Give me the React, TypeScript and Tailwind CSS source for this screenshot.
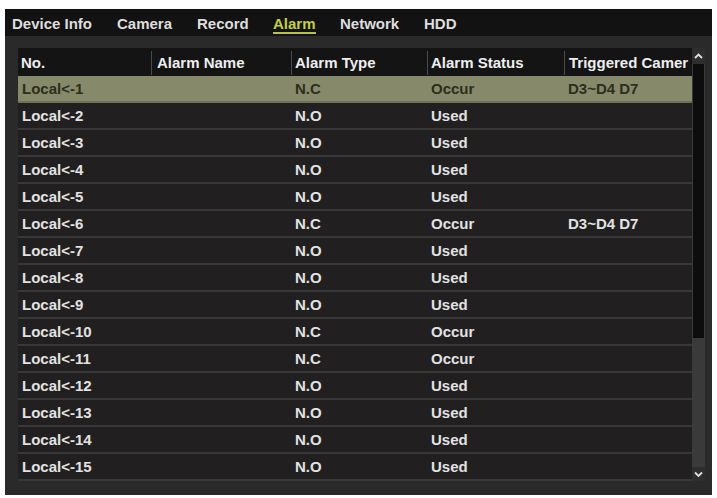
import React from "react";

const rows: [string, string, string, string][] = [
  ["Local<-1", "N.C", "Occur", "D3~D4 D7"],
  ["Local<-2", "N.O", "Used", ""],
  ["Local<-3", "N.O", "Used", ""],
  ["Local<-4", "N.O", "Used", ""],
  ["Local<-5", "N.O", "Used", ""],
  ["Local<-6", "N.C", "Occur", "D3~D4 D7"],
  ["Local<-7", "N.O", "Used", ""],
  ["Local<-8", "N.O", "Used", ""],
  ["Local<-9", "N.O", "Used", ""],
  ["Local<-10", "N.C", "Occur", ""],
  ["Local<-11", "N.C", "Occur", ""],
  ["Local<-12", "N.O", "Used", ""],
  ["Local<-13", "N.O", "Used", ""],
  ["Local<-14", "N.O", "Used", ""],
  ["Local<-15", "N.O", "Used", ""],
];

const tabs = [
  { label: "Device Info", w: "w-[105px]" },
  { label: "Camera", w: "w-[80px]" },
  { label: "Record", w: "w-[76px]" },
  { label: "Alarm", w: "w-[67px]", active: true },
  { label: "Network", w: "w-[84px]" },
  { label: "HDD", w: "w-[60px]" },
];

export default function App() {
  return (
    <div
      className="w-[717px] h-[498px] bg-white pl-[5px] pt-[9px] overflow-hidden"
      style={{ fontFamily: '"Liberation Sans", Arial, sans-serif' }}
    >
      <div className="w-[707px] h-[486px] bg-[#2a2a2a] flex flex-col">
        {/* tab bar */}
        <div className="h-[27px] bg-[#121212] flex items-center pl-[7px] pt-[2px] text-[15px] font-bold">
          {tabs.map((t) => (
            <div key={t.label} className={`${t.w} flex`}>
              <span
                className={
                  t.active
                    ? "text-[#c4d040] border-b-2 border-[#b8c43c] leading-[17px] mt-[2px]"
                    : "text-[#dedede] leading-[17px]"
                }
              >
                {t.label}
              </span>
            </div>
          ))}
        </div>

        {/* table */}
        <div className="pl-[13px] pt-[12px] flex">
          <div className="w-[674px] flex flex-col text-[15px] font-bold">
            {/* header */}
            <div className="h-[28px] bg-[#141414] flex items-center text-[#eeeeee] pt-[2px]">
              <div className="w-[134px] pl-[3px] border-r border-[#4a4a4a] h-[24px] flex items-center">No.</div>
              <div className="w-[140px] pl-[5px] border-r border-[#4a4a4a] h-[24px] flex items-center">Alarm Name</div>
              <div className="w-[136px] pl-[3px] border-r border-[#4a4a4a] h-[24px] flex items-center">Alarm Type</div>
              <div className="w-[137px] pl-[3px] border-r border-[#4a4a4a] h-[24px] flex items-center">Alarm Status</div>
              <div className="w-[127px] pl-[4px] h-[24px] flex items-center overflow-hidden whitespace-nowrap">Triggered Camer</div>
            </div>
            {rows.map((r, i) => {
              const sel = i === 0;
              return (
                <div
                  key={r[0]}
                  className={`h-[27px] flex items-center pt-[2px] border-b-2 ${
                    sel
                      ? "bg-[#878a6a] text-[#2c2e1e] border-[#6f7258]"
                      : "bg-[#211f20] text-[#e2e2e2] border-[#383838]"
                  }`}
                >
                  <div className="w-[134px] pl-[4px] whitespace-nowrap">{r[0]}</div>
                  <div className="w-[140px]"></div>
                  <div className="w-[136px] pl-[3px]">{r[1]}</div>
                  <div className="w-[137px] pl-[3px]">{r[2]}</div>
                  <div className="w-[127px] pl-[3px] whitespace-nowrap">{r[3]}</div>
                </div>
              );
            })}
          </div>

          {/* scrollbar */}
          <div className="w-[13px] h-[433px] bg-[#3a3a3a] flex flex-col">
            <div className="h-[16px] bg-[#2e2e2e] flex items-center justify-center">
              <svg width="9" height="6" viewBox="0 0 9 6">
                <path d="M1 5 L4.5 1.5 L8 5" stroke="#e0e0e0" strokeWidth="1.8" fill="none" />
              </svg>
            </div>
            <div className="h-[274px] bg-[#0d0d0d] mx-[1px]"></div>
            <div className="flex-1"></div>
            <div className="h-[14px] bg-[#2e2e2e] flex items-center justify-center">
              <svg width="9" height="6" viewBox="0 0 9 6">
                <path d="M1 1.5 L4.5 5 L8 1.5" stroke="#e0e0e0" strokeWidth="1.8" fill="none" />
              </svg>
            </div>
          </div>
        </div>
      </div>
    </div>
  );
}
